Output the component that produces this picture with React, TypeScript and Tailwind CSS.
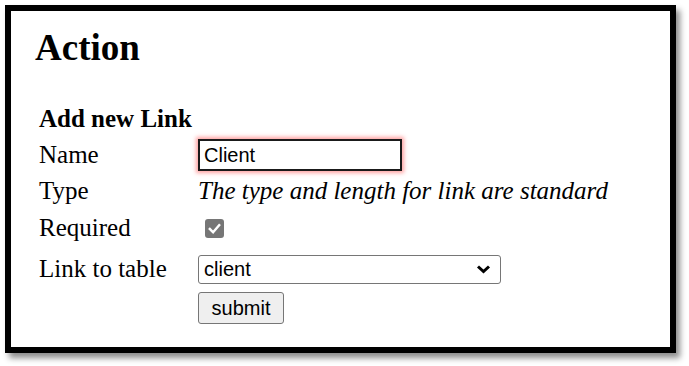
import React from "react";

export default function App() {
  return (
    <div className="w-[689px] h-[366px] bg-white relative overflow-hidden">
      <div className="absolute left-[5px] top-[5px] w-[671px] h-[348px] border-[6px] border-black bg-white shadow-[4px_5px_6px_rgba(0,0,0,0.45)] pl-[28px] pt-[16px]" style={{ fontFamily: '"Liberation Serif", "Times New Roman", serif' }}>
        <div className="text-[37px] font-bold leading-[42px] text-black ml-[-4px]">Action</div>
        <div className="mt-[32px] flex flex-col text-[25px] text-black">
          <div className="h-[36px] flex items-center font-bold">Add new Link</div>
          <div className="h-[36px] flex items-center">
            <div className="w-[159px]">Name</div>
            <div className="w-[204px] h-[32px] border-2 border-[#1a1a1a] bg-white shadow-[0_0_4px_2px_rgba(255,70,70,0.5)] flex items-center px-[4px] text-[20px] text-black" style={{ fontFamily: '"Liberation Sans", Arial, sans-serif' }}>Client</div>
          </div>
          <div className="h-[36px] flex items-center">
            <div className="w-[159px]">Type</div>
            <div className="italic">The type and length for link are standard</div>
          </div>
          <div className="h-[38px] flex items-center">
            <div className="w-[159px]">Required</div>
            <div className="ml-[7px] w-[19px] h-[19px] rounded-[3px] bg-[#767676] flex items-center justify-center">
              <svg width="15" height="15" viewBox="0 0 16 16">
                <path d="M3 8.5 L6.5 12 L13 4.5" fill="none" stroke="white" strokeWidth="2.6" strokeLinecap="square" />
              </svg>
            </div>
          </div>
          <div className="h-[44px] flex items-center">
            <div className="w-[159px]">Link to table</div>
            <div className="w-[303px] h-[29px] border border-[#767676] rounded-[3px] bg-white flex items-center justify-between pl-[5px] pr-[9px] text-[20px] text-black" style={{ fontFamily: '"Liberation Sans", Arial, sans-serif' }}>
              <span>client</span>
              <svg width="15" height="10" viewBox="0 0 15 10">
                <path d="M2 2.5 L7.5 7.5 L13 2.5" fill="none" stroke="black" strokeWidth="3" />
              </svg>
            </div>
          </div>
          <div className="h-[34px] flex items-center pl-[159px]">
            <div className="w-[86px] h-[32px] border border-[#767676] rounded-[3px] bg-[#efefef] flex items-center justify-center text-[20px] text-black" style={{ fontFamily: '"Liberation Sans", Arial, sans-serif' }}>submit</div>
          </div>
        </div>
      </div>
    </div>
  );
}
